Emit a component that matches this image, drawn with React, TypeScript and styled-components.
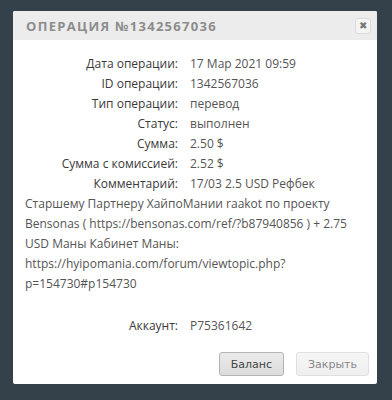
import React from 'react';
import styled, { createGlobalStyle } from 'styled-components';

const GlobalStyle = createGlobalStyle`
	html, body {
		margin: 0;
		padding: 0;
		background: #35414a;
	}
	body {
		font-family: "Open Sans", "Liberation Sans", sans-serif;
	}
`;

const Page = styled.div`
	width: 392px;
	height: 400px;
	padding: 11px 0 0 13px;
	box-sizing: border-box;
`;

const Dialog = styled.div`
	width: 364px;
	height: 373px;
	background: #fff;
	border-radius: 2px;
	display: flex;
	flex-direction: column;
	overflow: hidden;
`;

const Header = styled.div`
	height: 29px;
	background: #ececec;
	display: flex;
	align-items: center;
	justify-content: space-between;
	padding: 0 6px 0 13px;
`;

const Title = styled.div`
	font-size: 13px;
	font-weight: 700;
	letter-spacing: 1.3px;
	color: #8c8c8c;
	text-transform: uppercase;
`;

const CloseButton = styled.button`
	width: 16px;
	height: 16px;
	padding: 0;
	border: 1px solid #dcdcdc;
	border-radius: 3px;
	background: #f4f4f4;
	color: #777;
	font-size: 10px;
	line-height: 14px;
	display: flex;
	align-items: center;
	justify-content: center;
	cursor: pointer;
`;

const Body = styled.div`
	flex: 1;
	padding: 14px 8px 8px 12px;
	display: flex;
	flex-direction: column;
`;

const Rows = styled.div`
	display: grid;
	grid-template-columns: 153px 1fr;
	column-gap: 12px;
	font-size: 12px;
	line-height: 20px;
`;

const Label = styled.div`
	text-align: right;
	color: #3a3a3a;
`;

const Value = styled.div`
	color: #555;
`;

const Comment = styled.div`
	font-size: 12px;
	line-height: 20px;
	color: #555;
	padding-right: 8px;
`;

const AccountRows = styled(Rows)<{ $top: number }>`
	margin-top: ${p => p.$top}px;
`;

const Footer = styled.div`
	margin-top: auto;
	display: flex;
	justify-content: flex-end;
	gap: 12px;
`;

const Button = styled.button<{ $primary?: boolean }>`
	height: 24px;
	padding: 0 11px;
	border-radius: 3px;
	font-family: "DejaVu Sans", "Liberation Sans", sans-serif;
	font-size: 11px;
	border: 1px solid ${p => (p.$primary ? '#b4b4b4' : '#e0e0e0')};
	background: ${p => (p.$primary
		? 'linear-gradient(#ebebeb, #dcdcdc)'
		: 'linear-gradient(#f6f6f6, #efefef)')};
	color: ${p => (p.$primary ? '#444' : '#888')};
	cursor: pointer;
`;

const rows: [string, string][] = [
	['Дата операции:', '17 Мар 2021 09:59'],
	['ID операции:', '1342567036'],
	['Тип операции:', 'перевод'],
	['Статус:', 'выполнен'],
	['Сумма:', '2.50 $'],
	['Сумма с комиссией:', '2.52 $'],
	['Комментарий:', '17/03 2.5 USD Рефбек'],
];

export default function App() {
	return (
		<>
			<GlobalStyle />
			<Page>
				<Dialog>
					<Header>
						<Title>Операция №1342567036</Title>
						<CloseButton>✖</CloseButton>
					</Header>
					<Body>
						<Rows>
							{rows.map(([label, value]) => (
								<React.Fragment key={label}>
									<Label>{label}</Label>
									<Value>{value}</Value>
								</React.Fragment>
							))}
						</Rows>
						<Comment>
							Старшему Партнеру ХайпоМании raakot по проекту Bensonas ( https://bensonas.com/ref/?b87940856 ) + 2.75 USD Маны Кабинет Маны: https://hyipomania.com/forum/viewtopic.php?p=154730#p154730
						</Comment>
						<AccountRows $top={22}>
							<Label>Аккаунт:</Label>
							<Value>P75361642</Value>
						</AccountRows>
						<Footer>
							<Button $primary>Баланс</Button>
							<Button>Закрыть</Button>
						</Footer>
					</Body>
				</Dialog>
			</Page>
		</>
	);
}
